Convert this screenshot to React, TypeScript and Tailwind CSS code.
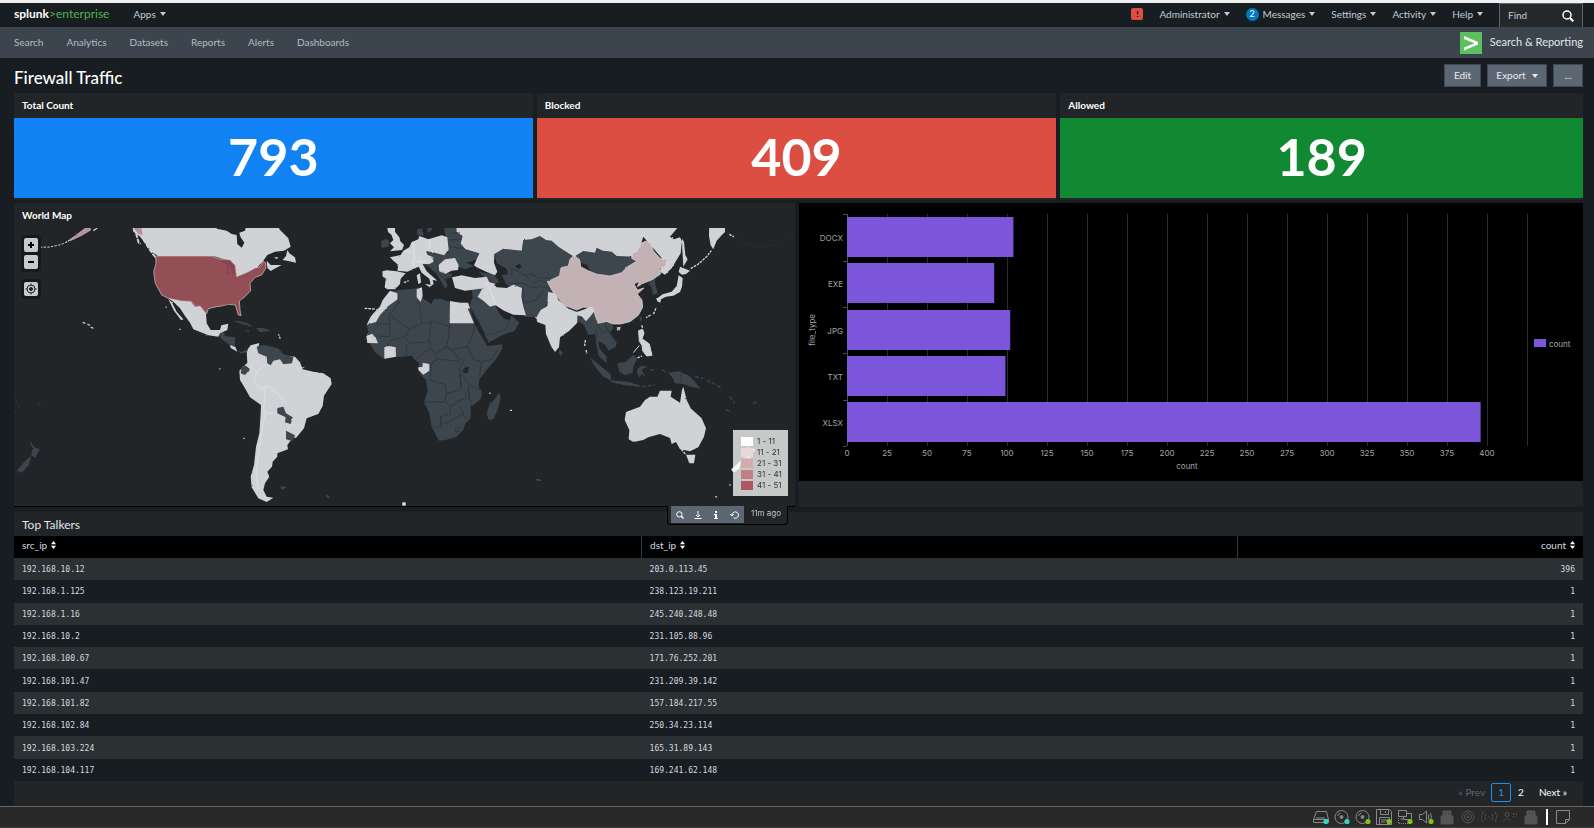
import React from "react";

const LATO = "font-['Lato','Open_Sans',sans-serif]";

const navLinks = ["Search", "Analytics", "Datasets", "Reports", "Alerts", "Dashboards"];

const stats = [
  { title: "Total Count", value: 793, color: "bg-[#1182f3]" },
  { title: "Blocked", value: 409, color: "bg-[#dc4e41]" },
  { title: "Allowed", value: 189, color: "bg-[#118832]" },
];

const talkers: [string, string, number][] = [
  ["192.168.10.12", "203.0.113.45", 396],
  ["192.168.1.125", "238.123.19.211", 1],
  ["192.168.1.16", "245.240.248.48", 1],
  ["192.168.10.2", "231.105.88.96", 1],
  ["192.168.100.67", "171.76.252.201", 1],
  ["192.168.101.47", "231.209.39.142", 1],
  ["192.168.101.82", "157.184.217.55", 1],
  ["192.168.102.84", "250.34.23.114", 1],
  ["192.168.103.224", "165.31.89.143", 1],
  ["192.168.104.117", "169.241.62.148", 1],
];

const fileTypes = [
  { name: "DOCX", count: 104, y: 14 },
  { name: "EXE", count: 92, y: 60 },
  { name: "JPG", count: 102, y: 107 },
  { name: "TXT", count: 99, y: 153 },
  { name: "XLSX", count: 396, y: 199 },
];

const mapLegend = [
  { label: "1 - 11", color: "bg-white" },
  { label: "11 - 21", color: "bg-[#ead7d8]" },
  { label: "21 - 31", color: "bg-[#d6a9ac]" },
  { label: "31 - 41", color: "bg-[#c27e83]" },
  { label: "41 - 51", color: "bg-[#af575e]" },
];

function Caret({ className = "" }: { className?: string }) {
  return (
    <svg viewBox="0 0 6 4" className={`h-1 w-1.5 shrink-0 ${className}`} fill="currentColor" aria-hidden="true">
      <path d="M0 0h6L3 4z" />
    </svg>
  );
}

function SortIcon() {
  return (
    <svg viewBox="0 0 5 8" className="h-2 w-[5px]" fill="#fff" aria-hidden="true">
      <path d="M0 3.200h5L2.500 0zM0 4.800h5L2.500 8z" />
    </svg>
  );
}

function Magnifier({ className }: { className: string }) {
  return (
    <svg viewBox="0 0 12 12" className={className} fill="none" stroke="currentColor" aria-hidden="true">
      <circle cx="5" cy="5" r="4" strokeWidth="1.500" />
      <path d="M8 8l3.300 3.300" strokeWidth="2.200" />
    </svg>
  );
}

function TopMenu({ label, children }: { label: string; children?: React.ReactNode }) {
  return (
    <button type="button" className="flex items-center gap-1 text-[#c3cbd4]">
      {children}
      <span>{label}</span>
      <Caret />
    </button>
  );
}

function WorldMap() {
  return (
    <svg viewBox="42 84 2343 834" className="block h-auto w-full" role="img" aria-label="World map of traffic by country">
      <defs>
        <filter id="coast" x="0" y="0" width="100%" height="100%">
          <feTurbulence type="fractalNoise" baseFrequency="0.18" numOctaves="2" seed="4" />
          <feDisplacementMap in="SourceGraphic" scale="5" xChannelSelector="R" yChannelSelector="G" />
        </filter>
      </defs>
      <rect x="42" y="84" width="2343" height="837" fill="#212527" />
      <g filter="url(#coast)">
        {/* Americas */}
        <g fill="#3c444d">
          <path d="M655 402L670 392 675 408 705 412 705 442 690 435 665 418zM712 450L724 456 740 449 738 457 722 461zM698 363L718 363 742 370 760 380 735 375zM768 384L790 384 812 392 780 397zM732 390L748 391 746 396z" />
          <path d="M90 725L105 745 118 748 105 772 95 765 100 745zM92 770L85 795 65 817 52 812 70 790zM843 860L858 862 845 868zM978 885L990 892 982 892z" stroke="#3c444d" strokeWidth="3" />
          <path d="M46 598L54 612 60 630M115 612L128 604M42 632L48 637" fill="none" stroke="#3c444d" strokeWidth="3" strokeDasharray="5 7" />
        </g>
        <g fill="#d0d2d6">
          <path d="M392 60L650 60 650 86 680 92 695 102 710 105 712 132 725 143 733 128 722 112 718 98 735 92 742 60 835 60 838 88 865 115 872 140 852 152 825 155 802 165 790 182 770 205 735 222 710 230 705 195 680 180 640 168 474 168 455 155 435 128 418 108 400 95z" />
          <path d="M848 180L858 168 862 150 868 160 885 172 888 188 868 184zM800 182L812 195 845 195 828 204 812 213 802 204zM822 172l12 0-3 6z" />
          <path d="M503 294L545 303 572 304 585 320 600 318 618 340 620 370 632 390 660 390 664 376 685 371 682 390 660 400 655 410 625 406 580 388 570 368 555 348 540 325 520 305zM505 298L515 306 530 335 550 358 543 360 522 332zM690 435L706 441 712 455 692 444z" />
          <path d="M740 452L752 436 778 429 775 445 860 468 885 470 900 487 908 508 940 515 970 520 992 535 995 552 972 587 968 618 955 642 920 655 912 685 888 714 880 712 862 735 864 748 832 760 832 770 818 785 816 800 802 815 808 830 795 850 790 870 800 890 820 893 800 906 775 895 755 862 752 830 762 795 768 740 778 700 782 640 783 615 750 592 735 565 720 540 718 512 742 488z" />
        </g>
        <path d="M408 100L416 128 422 132M430 118L450 150 474 182" fill="none" stroke="#d0d2d6" strokeWidth="6" strokeDasharray="14 3" />
        <path d="M395 78L424 84 428 106 416 102z" fill="#b88f94" />
        <path d="M120 142L150 141 182 134 200 126" fill="none" stroke="#d0d2d6" strokeWidth="3" strokeDasharray="7 4" />
        <path d="M198 127L225 108 268 76 272 90 245 106 220 118z" fill="#b88f94" stroke="#d0d2d6" strokeWidth="2" />
        <path d="M280 92l12-8M248 367l8 3M262 372l8 4M272 381l8 4M497 321l3 1M538 387l4 2M835 403l3 4M838 410l3 6M730 714l4 2M658 506l3 1" fill="none" stroke="#d0c0c2" strokeWidth="4" />
        <path
          d="M467 168L636 168 655 176 682 178 706 195 710 230 745 215 765 204 780 200 790 183 798 190 797 205 785 225 765 232 750 250 752 272 735 290 718 303 720 330 723 347 715 345 706 315 685 313 665 318 650 320 625 326 620 341 600 318 587 320 575 305 545 303 505 295 485 285 466 250 461 215 468 190z"
          fill="#925057"
          stroke="#d8c8ca"
          strokeWidth="2"
        />
        <path d="M660 184L690 180 700 192 705 215 702 226 694 218 690 200zM680 198l6 4 2 24-8-4z" fill="#87454d" />
        <g fill="#3c444d">
          <path d="M770 440L790 434 835 445 850 462 880 472 876 490 850 493 840 478 820 482 812 496 802 490 800 470 775 460z" />
          <path d="M725 500L738 497 750 508 735 525 722 520zM832 624L850 620 858 640 878 652 872 672 855 667 857 652 832 640zM858 692L885 706 878 724 858 718z" />
        </g>
        <path
          d="M748 500L772 515 800 492M772 515L760 545 785 568 792 560 810 562 842 590 862 615M792 565L795 600 790 625 800 640 830 638M795 640L785 700 775 760 768 820 775 870M862 690L880 672M893 506l20-4"
          fill="none"
          stroke="#e4e5e7"
          strokeWidth="2"
        />

        {/* Europe, Africa, Asia and Oceania */}
        <g transform="translate(1050 0)">
          <g fill="#3c444d">
            <path d="M50 375L62 350 95 310 120 275 145 270 190 266 205 262 216 268 216 290 222 298 245 312 250 298 270 296 300 305 355 308 360 325 372 368 385 392 400 418 412 438 458 433 455 450 440 475 410 510 388 538 386 560 396 575 393 597 362 622 362 655 345 672 340 690 318 712 290 719 266 722 258 705 245 680 238 640 222 606 233 575 228 540 210 522 206 488 195 480 185 467 160 470 130 472 103 477 75 457 60 432 50 410 55 395z" />
            <path d="M448 577L452 595 443 630 430 658 416 660 410 642 418 612 432 600z" />
            <path d="M278 60L330 60 345 145 388 158 383 178 350 188 372 198 345 208 325 200 300 205 240 195 225 160 245 150 295 160z" />
            <path d="M238 170L270 165 275 212 305 222 305 232 285 238 293 258 285 266 276 248 262 225 240 203 215 190z" />
            <path d="M200 90L215 84 222 108 203 106zM230 60L250 60 245 92 232 98zM93 124L108 116 118 124 116 140 95 143z" />
            <path d="M365 270L400 262 405 290 437 318 448 340 462 356 480 360 484 346 508 368 494 392 460 404 415 428 408 412 395 382 375 345 358 318 368 292z" />
            <path d="M433 162L460 146 515 152 520 120 545 118 570 106 588 120 605 120 625 140 662 163 672 182 655 200 635 205 625 230 595 245 605 275 592 310 566 352 525 350 500 330 480 262 468 252 455 225 474 222 468 205 450 195 440 190z" />
            <path d="M385 216L430 222 442 236 448 248 430 250 410 236z" />
            <path d="M675 164L700 153 735 158 740 141 758 152 785 155 800 167 845 158 862 184 832 200 815 218 780 228 740 220 718 210 712 195 695 190z" />
            <path d="M628 314L680 334 678 345 640 330zM680 330L695 360 697 372 683 362z" />
            <path d="M690 360L715 335 738 330 738 365 765 370 785 363 790 385 780 398 800 425 797 442 775 452 765 434 745 422 748 445 770 470 770 490 746 468 740 442 735 402 715 405 705 382z" />
            <path d="M718 470L740 488 782 522 783 541 760 530 735 500zM780 541L830 545 870 556 868 560 825 556 785 547zM802 490L825 486 850 464 862 476 850 500 848 518 825 526 808 515zM862 506L872 498 895 500 874 508 886 530 874 522 870 535 862 520z" />
            <path d="M955 518L985 514 1015 526 1032 542 1052 566 1022 560 1000 552 975 550 968 534zM895 252L917 227 915 248 923 280 908 286 905 262zM868 352L876 350 873 370zM628 447L638 458 634 468 627 462z" />
            <path d="M875 560L915 555M935 510l20 8M1035 530L1060 535M1070 540L1112 562M1140 590l14 20M1128 628l16 10M1208 610l14-4M900 508l10 4" fill="none" stroke="#3c444d" strokeWidth="4" strokeDasharray="12 6" />
            <path d="M1138 98L1160 112 1180 128 1230 142 1290 133 1318 115 1340 95" fill="none" stroke="#2c3135" strokeWidth="3" strokeDasharray="6 5" />
            <path d="M560 838l12 4" stroke="#4a5158" strokeWidth="4" />
          </g>

          <g fill="#d0d2d6">
            <path d="M318 60L990 60 982 84 960 110 972 118 990 112 996 124 992 160 965 205 945 224 930 215 940 180 880 110 860 170 800 168 785 155 758 152 740 143 735 158 700 153 672 170 625 140 605 122 588 120 570 108 545 118 520 120 515 152 460 146 433 162 432 188 442 215 435 226 410 216 380 202 372 196 388 160 345 147 332 130 338 108 320 96z" />
            <path d="M1078 60L1125 60 1125 96 1115 106 1100 122 1090 148 1082 136 1077 108zM996 116L1002 125 1006 165 1013 178 1000 200 997 150z" />
            <path d="M990 200L1020 212 1008 222 996 224 986 216zM986 226L998 234 996 260 990 276 970 287 948 290 930 299 920 296 938 283 965 275 980 258zM918 294L933 298 931 308 922 304z" />
            <path d="M108 60L136 60 135 95 148 112 151 124 162 135 156 150 120 154 132 142 120 130 130 120 124 104 114 96z" />
            <path d="M120 172L152 165 160 152 178 142 185 126 205 118 208 108 235 118 275 106 292 112 296 150 282 166 255 158 228 153 232 164 250 172 250 186 238 192 218 192 230 214 262 242 248 240 251 252 243 258 238 236 215 218 206 200 188 208 172 215 142 212 145 195 130 182z" />
            <path d="M97 214L110 211 140 214 167 220 152 236 150 252 135 268 112 268 104 262 110 236 98 230z" />
            <path d="M265 196L285 178 315 174 326 196 324 210 305 212 285 222 268 214zM200 226l10-6 3 28-8 4zM224 252l20 2-4 8zM156 246l16-8M285 215z" />
            <path d="M306 232L335 226 375 234 410 230 418 246 438 252 415 262 380 268 345 272 315 264z" />
            <path d="M396 268L425 248 440 262 470 264 490 254 516 264 514 290 520 320 528 346 490 344 462 332 437 316 420 320 400 302 383 290z" />
            <path d="M300 303L330 308 354 308 360 325 353 326 372 370 299 370zM120 272L142 280 143 298 115 318 90 345 78 366 50 374 62 350 72 338 90 320 98 300zM200 268L216 262 218 288 212 306 200 292zM49 408L66 401 76 410 84 430 52 429z" />
            <path d="M103 442L118 438 137 442 138 470 103 476zM205 502L218 500 218 488 238 492 238 512 220 524 205 510z" />
            <path d="M594 276L618 280 625 300 655 326 680 336 704 328 725 318 736 330 722 348 708 364 696 350 682 346 682 368 658 392 630 412 627 442 615 456 604 440 588 402 586 375 562 366 558 354 572 330 592 318z" />
            <path d="M866 392L878 388 882 400 876 416 898 432 906 466 890 468 878 452 876 436 868 424zM850 458L868 436" stroke="#d0d2d6" strokeWidth="3" />
            <path d="M828 636L870 620 885 600 900 590 922 590 930 572 965 572 962 590 990 608 996 570 1000 560 1010 600 1022 625 1055 655 1068 685 1062 710 1045 742 1020 754 990 748 978 726 965 732 960 714 930 702 895 712 880 720 850 726 836 718 838 690 824 660zM1008 764L1036 764 1032 790 1018 790zM1192 742L1215 748 1200 775 1180 772zM1175 780L1168 806 1150 818 1143 808 1158 795z" />
            <path d="M162 248l14-6M44 325l30 2M706 420l-2 18M708 450l3 12M918 325l-8 18M902 345l-14 8M875 376l3 8M1022 206L1045 192 1070 170 1084 152M1138 103l14 8M480 631l6 0M1138 855l4 0M1096 890l5 1M418 579l4 1M1006 762l-12-14M862 474l14-6" fill="none" stroke="#d0d2d6" strokeWidth="4" strokeDasharray="8 3" />
            <circle cx="162" cy="912" r="6" />
          </g>

          <path
            d="M672 165L690 180 692 200 715 212 740 222 780 228 815 218 832 200 860 184 845 175 848 160 868 152 872 130 888 123 902 130 910 152 930 175 952 178 946 200 928 205 932 222 905 240 880 250 862 260 868 244 852 252 862 270 882 264 862 282 876 300 878 322 865 346 840 365 812 372 790 372 770 365 744 370 735 345 730 322 700 322 680 330 640 315 622 290 608 275 592 245 628 228 633 203 655 198 660 178z"
            fill="#c2b2b5"
            stroke="#e3d9da"
            strokeWidth="2"
          />
          <path d="M800 382l12-2-2 10-8 2z" fill="#c2b2b5" />
          <path d="M497 198l12-6 4 10-8 4zM342 505l14-4-4 18-12-2zM355 560l4 40M330 525l4 30" fill="#212527" stroke="#212527" strokeWidth="2" />
          <path
            d="M118 345L178 388 215 370 210 318 202 305M118 345L120 410 70 408M145 290L145 310 118 345M178 388L165 412 130 418 108 438M215 370L242 368 240 408 234 425 178 430 165 412M245 362L296 378 296 412 288 440 304 450 330 478M299 370L299 384M242 368L245 362M168 468L170 432M240 420L242 445 225 455 200 475M372 372L370 400 352 440 370 478 395 486 425 478 442 452M352 440L304 450 288 440 258 462 242 445M258 462L260 478 245 490 240 540 258 545 268 550 285 552 290 580 332 570 330 500 342 482M290 580L285 605 222 606M285 605L302 620 330 600 348 596 345 575M302 620L300 640 272 650 272 680 250 682M272 650L272 672 300 665 340 640 330 620M340 640L345 655M316 684l10-2 2 10-10 4zM332 520L358 555 390 570M395 486L388 530M362 622L362 600 350 590M245 490L262 478 330 484M80 372L118 372"
            fill="none"
            stroke="#2c3238"
            strokeWidth="2"
          />
          <path
            d="M408 404L435 400 468 386 478 365M485 225L485 205 525 225 550 250 570 240 590 250M475 250L520 250 545 262 575 260 600 265M520 262L520 310 560 300 580 272M295 120L335 118M300 140L345 146M300 100L330 98M245 172L265 195 262 215 285 240M278 215L290 232 305 228M745 375L755 400 775 390 795 425M738 385L740 420M765 370L775 395M992 522L994 550M850 466L820 492M365 290L385 300M525 225L545 222 570 235 600 232"
            fill="none"
            stroke="#2c3238"
            strokeWidth="2"
          />
          <path
            d="M165 152L190 158 195 172 188 190 195 205M190 128L192 155M238 118L240 145 228 155M190 182L205 186 232 182M205 186L215 178M410 248L425 280 437 316M384 262L400 268M108 234L106 262"
            fill="none"
            stroke="#e6e7e9"
            strokeWidth="2"
          />
        </g>
      </g>
    </svg>
  );
}

function MapControls() {
  const button = "flex h-3.5 w-3.5 items-center justify-center rounded-xs bg-[#c8c9c9] text-black";
  return (
    <div className="absolute top-8 left-[7px] flex flex-col gap-[7px]">
      <div className="flex flex-col gap-[3px] rounded bg-[#171a1d] p-[3px]">
        <button type="button" aria-label="Zoom in" className={button}>
          <svg viewBox="0 0 8 8" className="h-2 w-2" stroke="currentColor" strokeWidth="2"><path d="M4 1v6M1 4h6" /></svg>
        </button>
        <button type="button" aria-label="Zoom out" className={button}>
          <svg viewBox="0 0 8 8" className="h-2 w-2" stroke="currentColor" strokeWidth="2"><path d="M1 4h6" /></svg>
        </button>
      </div>
      <div className="rounded bg-[#171a1d] p-[3px]">
        <button type="button" aria-label="Reset view" className={button}>
          <svg viewBox="0 0 12 12" className="h-3 w-3" fill="none" stroke="#222" strokeWidth="1">
            <circle cx="6" cy="6" r="4" />
            <circle cx="6" cy="6" r="1.500" fill="#222" />
            <path d="M6 .5v2M6 9.500v2M.5 6h2M9.500 6h2" />
          </svg>
        </button>
      </div>
    </div>
  );
}

function MapPanel() {
  return (
    <section className="relative border-b border-black bg-[#212527]">
      <h2 className="h-[25px] px-2 text-[10px] leading-6 font-bold text-white">World Map</h2>
      <WorldMap />
      <MapControls />
      <ul className="absolute right-[7px] bottom-2.5 flex w-[55px] flex-col gap-px bg-white/75 px-2 py-1.5 text-[8px] leading-[10px] text-[#333] font-['Inter',sans-serif]">
        {mapLegend.map((item) => (
          <li key={item.label} className="flex items-center gap-1 whitespace-nowrap">
            <span className={`h-[9px] w-3 shrink-0 ${item.color}`} />
            {item.label}
          </li>
        ))}
      </ul>
      <div className="absolute top-full right-[7px] z-10 flex h-[19px] items-start rounded-b border border-t-0 border-black bg-[#212527] pr-1.5 pl-[3px] text-white">
        <div className="flex h-[17px] items-center gap-2.5 bg-[#5c6773] px-[5px]">
          <button type="button" aria-label="Open in search"><Magnifier className="h-2 w-2" /></button>
          <button type="button" aria-label="Download">
            <svg viewBox="0 0 8 8" className="h-2 w-2" fill="none" stroke="currentColor"><path d="M4 0v6M2 4l2 2 2-2M.5 7.500h7" /></svg>
          </button>
          <button type="button" aria-label="Inspect">
            <svg viewBox="0 0 8 8" className="h-2 w-2" fill="currentColor"><path d="M3 0h2v2H3zM2 3h3v4h1v1H2V7h1V4H2z" /></svg>
          </button>
          <button type="button" aria-label="Refresh">
            <svg viewBox="0 0 9 8" className="h-2 w-[9px]" fill="none" stroke="currentColor"><path d="M2 4a3.200 3.200 0 1 1 1.500 2.800M.3 3l1.700 2 1.700-2" /></svg>
          </button>
        </div>
        <span className="pl-[7px] text-[8px] leading-[14px] text-[#c3cbd4] font-['Inter',sans-serif]">11m ago</span>
      </div>
    </section>
  );
}

function BarChart() {
  const scale = 1.6;
  const x0 = 48;
  const ticks = Array.from({ length: 18 }, (_, i) => i * 25);
  return (
    <section className="bg-[#212527]">
      <svg
        viewBox="0 0 784 278"
        className="block h-auto w-full bg-black text-[8px] font-['Inter',sans-serif]"
        role="img"
        aria-label="Count by file_type"
        fill="#a2a5a8"
      >
        {ticks.map((t) => (
          <rect key={t} x={x0 + t * scale} y="11" width="1" height="232" fill={t === 0 ? "#4a4a4a" : "#2c2c2c"} />
        ))}
        {[11, 58, 104, 150, 197, 243].map((y) => (
          <rect key={y} x="44" y={y} width="4" height="1" fill="#4a4a4a" />
        ))}
        {fileTypes.map((f) => (
          <g key={f.name}>
            <rect x={x0} y={f.y} width={f.count * scale} height="40" fill="#7b56db" />
            <text x="44" y={f.y + 24} textAnchor="end">{f.name}</text>
          </g>
        ))}
        {ticks.slice(0, 17).map((t) => (
          <text key={t} x={x0 + t * scale} y="253" textAnchor="middle">{t}</text>
        ))}
        <text x="388" y="266" textAnchor="middle">count</text>
        <text transform="translate(16 127) rotate(-90)" textAnchor="middle">file_type</text>
        <rect x="735" y="136" width="12" height="8" fill="#7b56db" />
        <text x="750" y="144">count</text>
      </svg>
    </section>
  );
}

function TalkersPanel() {
  const head = "px-2 pb-1 font-normal";
  const label = "inline-flex items-center gap-1";
  return (
    <section className="flex grow flex-col bg-[#212527]">
      <h2 className="h-6 px-2 text-xs leading-[26px] text-[#e1e6eb]">Top Talkers</h2>
      <table className="h-[245px] w-full table-fixed border-collapse text-[#d5dae0]">
        <thead className="bg-black text-[10px] leading-[17px]">
          <tr className="h-[22px]">
            <th className={`${head} w-2/5 text-left`}><button type="button" className={label}>src_ip <SortIcon /></button></th>
            <th className={`${head} w-[38%] border-l border-[#2f3d4a] text-left`}><button type="button" className={label}>dst_ip <SortIcon /></button></th>
            <th className={`${head} border-l border-[#2f3d4a] text-right`}><button type="button" className={label}>count <SortIcon /></button></th>
          </tr>
        </thead>
        <tbody className="text-[8px] leading-4 font-['DejaVu_Sans_Mono',monospace]">
          {talkers.map(([src, dst, count]) => (
            <tr key={src} className="h-[22px] odd:bg-[#2b3033] even:bg-[#171d21]">
              <td className="px-2 pt-0.5">{src}</td>
              <td className="px-2 pt-0.5">{dst}</td>
              <td className="px-2 pt-0.5 text-right">{count}</td>
            </tr>
          ))}
        </tbody>
      </table>
      <nav aria-label="Pagination" className="flex h-[22px] items-center justify-end pr-4 text-[10px] text-white">
        <span className="pr-1.5 text-[#5c6773]">« Prev</span>
        <a href="#page-1" className="flex h-[19px] w-5 items-center justify-center rounded-xs border border-[#1e93e6] text-[#1e93e6]">1</a>
        <a href="#page-2" className="px-[7px]">2</a>
        <a href="#next" className="pl-2">Next »</a>
      </nav>
    </section>
  );
}

function DeviceIcon({ dot, dim, children }: { dot?: string; dim?: boolean; children: React.ReactNode }) {
  return (
    <svg viewBox="0 0 16 16" className="h-4 w-4 shrink-0" fill="none" stroke={dim ? "#555" : "#8a8a8a"} aria-hidden="true">
      {children}
      {dot && <circle cx="13" cy="12.500" r="2.600" fill={dot} stroke="none" />}
    </svg>
  );
}

const disc = (
  <>
    <circle cx="7.500" cy="8" r="6.500" />
    <circle cx="7.500" cy="8" r="1.500" fill="#8a8a8a" />
    <path d="M3.500 7a4 4 0 0 1 3-3" />
  </>
);

const usb = (
  <>
    <path d="M4 7V2h8v5h2v8H2V7z" fill="#555" />
    <path d="M6 4h1v1H6zM9 4h1v1H9z" fill="#292929" stroke="none" />
  </>
);

function StatusBar() {
  const teal = "#2bd9c9";
  const green = "#7ec41a";
  return (
    <footer className="flex h-[22px] items-center justify-end gap-[5px] border-t border-[#666] border-b border-b-[#3d3d42] bg-[#292929] pr-[23px]">
      <DeviceIcon dot={teal}><path d="M3.500 2.500h10l2 8v3h-15v-3zM.5 10.500h15M3 9h9" /></DeviceIcon>
      <DeviceIcon dot={teal}>{disc}</DeviceIcon>
      <DeviceIcon dot={green}>{disc}</DeviceIcon>
      <DeviceIcon dot={green}><path d="M.5.5h13l2 2v13H.5zM4.500.5v5h8v-5M9.500 2v2M3.500 15.500v-7h10v4M5 11h6M5 13h4" /></DeviceIcon>
      <DeviceIcon dot={green}><path d="M1.500 1.500h8v6h-8zM9 4.500h5.500v6h-8V7.500M3.500 10H6" /><path d="M1.500 9v5.500H11" strokeDasharray="1 1" /></DeviceIcon>
      <DeviceIcon dot={green}><path d="M1.500 5.500h3l4-3.500v12l-4-3.500h-3zM10.500 5.500v5M12.500 4q1.500 4 0 8" /></DeviceIcon>
      <DeviceIcon dim>{usb}</DeviceIcon>
      <DeviceIcon dim><circle cx="8" cy="8" r="6" /><circle cx="8" cy="8" r="3.500" /><circle cx="8" cy="8" r="1" /></DeviceIcon>
      <DeviceIcon dim><path d="M2.500 2.500q-4 5.500 0 11M13.500 2.500q4 5.500 0 11M5 5q-2 3 0 6M11 5q2 3 0 6M7.500 8h1" strokeDasharray="3 1" /></DeviceIcon>
      <DeviceIcon dim><circle cx="5" cy="5.500" r="2" /><path d="M1.500 12.500q1-3 3.500-3t3.500 3M11.500 4v4M14.500 4v3" strokeDasharray="2 1" /></DeviceIcon>
      <DeviceIcon dim>{usb}</DeviceIcon>
      <span className="mx-0.5 h-4 w-0.5 bg-white" />
      <DeviceIcon><path d="M1.500 1.500h13v9l-4 4h-9zM14.500 10.500h-4v4" /></DeviceIcon>
    </footer>
  );
}

export default function App() {
  const action = "flex h-[23px] items-center justify-center gap-1.5 border border-[#3c4a57] bg-[#5c6773] text-[10px] text-[#e8ebee]";
  return (
    <div className={`flex min-h-screen flex-col border-t-[3px] border-[#f1f1f1] bg-[#171d21] ${LATO}`}>
      <header className="flex h-6 items-center pr-[11px] pl-3.5 text-[10px]">
        <a href="#home" className="flex items-center pb-0.5 text-xs font-bold text-white" aria-label="splunk enterprise">
          splunk<span className="font-normal text-[#53b153]">&gt;enterprise</span>
        </a>
        <div className="ml-6 pb-0.5"><TopMenu label="Apps" /></div>
        <div className="ml-auto flex items-center gap-4">
          <div className="flex items-center gap-4 pb-0.5">
            <span className="flex h-3 w-3 items-center justify-center rounded-xs bg-[#dc4e41] text-[8px] font-bold text-black">!</span>
            <TopMenu label="Administrator" />
          </div>
          <div className="flex items-center gap-4 pb-0.5">
            <TopMenu label="Messages">
              <span className="flex h-[13px] w-[13px] items-center justify-center rounded-full bg-[#007abd] text-[9px] text-white">2</span>
            </TopMenu>
            <TopMenu label="Settings" />
            <TopMenu label="Activity" />
            <TopMenu label="Help" />
          </div>
          <div className="-mb-px flex h-[25px] w-[84px] items-center border border-[#5c6773] bg-[#24282b] px-2 text-white">
            <input
              type="text"
              aria-label="Find"
              placeholder="Find"
              className="h-5 w-10 grow bg-transparent pb-0.5 outline-none placeholder:text-[#c3cbd4]"
            />
            <Magnifier className="h-3 w-3 shrink-0" />
          </div>
        </div>
      </header>

      <nav className="flex h-[31px] items-center justify-between bg-[#3c444d] pr-[11px] pl-3.5">
        <div className="flex items-center gap-[23px] text-[10px] text-[#b5bcc4]">
          {navLinks.map((link) => (
            <a key={link} href={`#${link.toLowerCase()}`}>{link}</a>
          ))}
        </div>
        <a href="#app" className="flex items-center gap-2 text-[11px] text-[#e1e6eb]">
          <svg viewBox="0 0 22 22" className="h-[22px] w-[22px]" aria-hidden="true">
            <path fill="#5cc05c" d="M0 0h22v22H0z" />
            <path fill="#fff" d="M4 4l14 6v2.500l-14 6v-3l10.500-4.300L4 7z" />
          </svg>
          Search &amp; Reporting
        </a>
      </nav>

      <main className="flex grow flex-col pr-[11px] pl-3.5">
        <div className="flex h-[35px] items-center justify-between">
          <h1 className="pt-1 text-[17px] font-medium text-white">Firewall Traffic</h1>
          <div className="flex gap-1.5">
            <button type="button" className={`${action} w-[37px]`}>Edit</button>
            <button type="button" className={`${action} w-[60px]`}>Export <Caret /></button>
            <button type="button" className={`${action} w-[30px]`} aria-label="More actions">...</button>
          </div>
        </div>

        <div className="grid grid-cols-[519fr_520fr_523fr] gap-1">
          {stats.map((s) => (
            <section key={s.title} className="bg-[#212527] pb-0.5">
              <h2 className="h-[25px] px-2 text-[10px] leading-6 font-bold text-white">{s.title}</h2>
              <p className={`flex h-20 items-center justify-center pb-1 text-[52px] leading-none font-bold text-white ${s.color}`}>{s.value}</p>
            </section>
          ))}
        </div>

        <div className="mt-[3px] mb-[5px] grid grid-cols-[781fr_784fr] gap-1">
          <MapPanel />
          <BarChart />
        </div>

        <TalkersPanel />
      </main>
      <StatusBar />
    </div>
  );
}
